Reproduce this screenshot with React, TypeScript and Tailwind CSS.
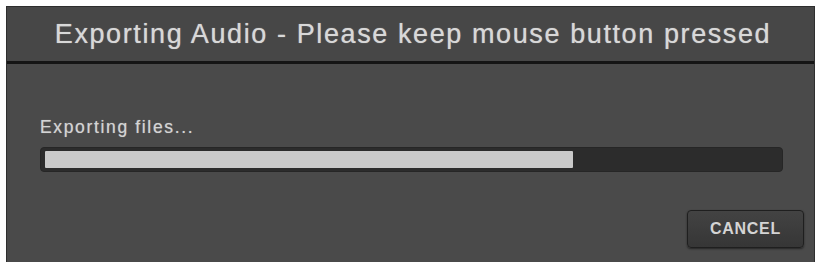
import React from 'react';

export default function App() {
  const progress = 71.9;

  return (
    <div className="w-[818px] h-[262px] bg-white pl-[6px] pt-[6px] pr-[3px] overflow-hidden font-['Liberation_Sans',Arial,sans-serif]">
      <div className="h-full flex flex-col border border-[#2e2e2e] border-b-0 bg-[#4a4a4a]">
        {/* Header */}
        <div className="h-[57px] shrink-0 flex items-center justify-center pl-[5px] bg-[#474747] border-b-[3px] border-[#151515]">
          <span className="text-[27px] leading-[30px] text-[#d8d8d8] tracking-[1.6px] [text-shadow:0_0_1px_rgba(216,216,216,0.7)]">
            Exporting Audio - Please keep mouse button pressed
          </span>
        </div>

        {/* Body */}
        <div className="flex-1 flex flex-col pl-[33px] pr-[31px]">
          <div className="mt-[53px] text-[17.5px] leading-[20px] text-[#d4d4d4] tracking-[1.65px] [text-shadow:0_0_1px_rgba(212,212,212,0.6)]">
            Exporting files...
          </div>
          <div className="mt-[10px] h-[25px] rounded-[4px] bg-[#2c2c2c] border border-[#262626] p-[3px] pl-[4px]">
            <div
              className="h-full bg-[#cacaca] rounded-[1px]"
              style={{ width: `${progress}%` }}
            />
          </div>
          <div className="flex justify-end mt-[38px]">
            <button className="w-[117px] h-[38px] -mr-[21px] rounded-[4px] border border-[#1f1f1f] bg-gradient-to-b from-[#434343] to-[#363636] shadow-[0_1px_2px_rgba(0,0,0,0.5)] text-[16px] font-bold text-[#d4d4d4] tracking-[0.7px]">
              CANCEL
            </button>
          </div>
        </div>
      </div>
    </div>
  );
}
